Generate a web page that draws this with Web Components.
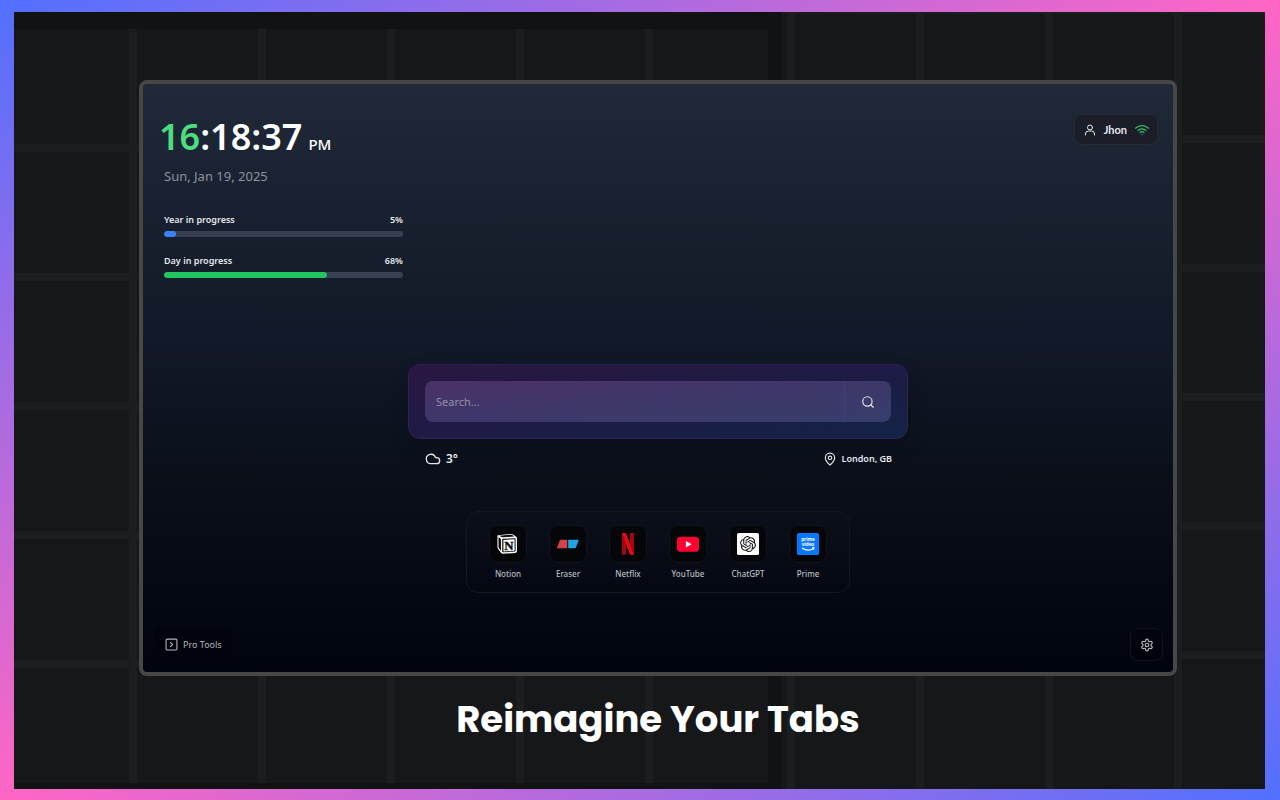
<!DOCTYPE html>
<html lang="en">
<head>
<meta charset="utf-8">
<meta name="viewport" content="width=device-width, initial-scale=1">
<title>Reimagine Your Tabs</title>
<style>
    :root {
        --green: #4ade80;
        --green-bar: #22c55e;
        --blue-bar: #3b82f6;
        --track: #374151;
        --text: #e5e7eb;
        --muted: #8b93a0;
        --stage: #161719;
        --line: #1c1d1e;
    }
    body {
        margin: 0;
        font-family: "Noto Sans", "Open Sans", sans-serif;
        color: var(--text);
    }
</style>
</head>
<body>
<promo-frame>
    <new-tab>
        <clock-panel slot="left" hours="16" rest=":18:37" period="PM" date="Sun, Jan 19, 2025"></clock-panel>
        <progress-row slot="left" label="Year in progress" value="5" color="blue-bar"></progress-row>
        <progress-row slot="left" label="Day in progress" value="68" color="green-bar"></progress-row>
        <user-chip slot="right">Jhon</user-chip>
        <search-box></search-box>
        <weather-row temp="3°" place="London, GB"></weather-row>
        <app-dock>
            <app-link icon="notion">Notion</app-link>
            <app-link icon="eraser">Eraser</app-link>
            <app-link icon="netflix">Netflix</app-link>
            <app-link icon="youtube">YouTube</app-link>
            <app-link icon="chatgpt">ChatGPT</app-link>
            <app-link icon="prime">Prime</app-link>
        </app-dock>
        <tool-button slot="footer" icon="tools">Pro Tools</tool-button>
        <tool-button slot="footer" icon="gear" name="Settings"></tool-button>
    </new-tab>
    <span slot="title">Reimagine Your Tabs</span>
</promo-frame>

<script>
const stroke = (size, body, width = 2) => `
    <svg width="${size}" height="${size}" viewBox="0 0 24 24" fill="none" stroke="currentColor" stroke-width="${width}" stroke-linecap="round" stroke-linejoin="round" aria-hidden="true">${body}</svg>`;

const icons = {
    user: stroke(12, '<circle cx="12" cy="7" r="5"/><path d="M3 22v-2a6 6 0 0 1 6-6h6a6 6 0 0 1 6 6v2"/>'),
    wifi: stroke(14, '<path d="M1 9a16 16 0 0 1 22 0"/><path d="M5 13a10 10 0 0 1 14 0"/><path d="M8.500 16.500a5 5 0 0 1 7 0"/><path d="M12 20h.01"/>', 2),
    search: stroke(14, '<circle cx="11" cy="11" r="8"/><path d="m21 21-4.300-4.300"/>'),
    cloud: stroke(16, '<path d="M17.500 19H9a7 7 0 1 1 6.710-9h1.790a4.500 4.500 0 1 1 0 9Z"/>'),
    pin: stroke(14, '<path d="M20 10c0 5-5.500 10.200-7.400 11.800a1 1 0 0 1-1.200 0C9.500 20.200 4 15 4 10a8 8 0 0 1 16 0"/><circle cx="12" cy="10" r="3"/>'),
    tools: stroke(13, '<rect x="2" y="2" width="20" height="20" rx="2"/><path d="m10 8 4 4-4 4"/>'),
    gear: stroke(14, '<path d="M12.220 2h-.44a2 2 0 0 0-2 2v.18a2 2 0 0 1-1 1.730l-.43.25a2 2 0 0 1-2 0l-.15-.08a2 2 0 0 0-2.730.73l-.22.38a2 2 0 0 0 .73 2.730l.15.1a2 2 0 0 1 1 1.720v.51a2 2 0 0 1-1 1.740l-.15.09a2 2 0 0 0-.73 2.730l.22.38a2 2 0 0 0 2.730.73l.15-.08a2 2 0 0 1 2 0l.43.25a2 2 0 0 1 1 1.730V20a2 2 0 0 0 2 2h.44a2 2 0 0 0 2-2v-.18a2 2 0 0 1 1-1.730l.43-.25a2 2 0 0 1 2 0l.15.08a2 2 0 0 0 2.730-.73l.22-.39a2 2 0 0 0-.73-2.730l-.15-.08a2 2 0 0 1-1-1.740v-.5a2 2 0 0 1 1-1.740l.15-.09a2 2 0 0 0 .73-2.730l-.22-.38a2 2 0 0 0-2.730-.73l-.15.08a2 2 0 0 1-2 0l-.43-.25a2 2 0 0 1-1-1.730V4a2 2 0 0 0-2-2z"/><circle cx="12" cy="12" r="3"/>')
};

const logos = {
    notion: `
        <path d="M1 2.500 15.500 1q1.200 0 2 .6L21 4.200q.8.700.8 1.500v14q0 1.800-1.700 2L6.500 22.600q-1.300 0-2-.9L1.300 17.500Q.5 16.600.5 15.500V3.600q0-1 .5-1.100z" fill="#fff"/>
        <path d="m2.300 2.900 13-1.100q.8 0 1.300.4l2.200 1.600L5.900 4.700q-.8 0-1.400-.5z" fill="#0a0b0e"/>
        <path d="m1.700 4.400 2.600 2.100v12.800l-2.200-2.900q-.4-.5-.4-1.200z" fill="#0a0b0e"/>
        <path d="m6.500 6.400 13-.8q.8 0 .8.800v13q0 .9-.8.900l-13 .8q-.8 0-.8-.8V7.300q0-.9.8-.9z" fill="#0a0b0e"/>
        <path d="m7 7.500 12.200-.8v12.700L7 20.100z" fill="#fff"/>
        <text x="13" y="18" text-anchor="middle" font-family="Liberation Serif, serif" font-weight="700" font-size="14" fill="#0a0b0e" stroke="#0a0b0e" stroke-width=".4">N</text>`,
    eraser: `
        <path d="M4.200 7.300h7v9.200H.5q-.7 0-.4-.8l2.900-7.600q.3-.8 1.200-.8z" fill="#d8414b"/>
        <path d="M12.200 7.300h11q.7 0 .4.800l-2.900 7.600q-.3.800-1.200.8h-7.300z" fill="#1fa5e1"/>`,
    netflix: `
        <path d="M5.500 0h4.300v23.400L5.500 24zM14.200 0h4.300v24l-4.300-.6z" fill="#a80710"/>
        <path d="M5.500 0h4.300l8.700 24-4.500-.6z" fill="#e50914"/>`,
    youtube: `
        <rect y="4" width="24" height="16.500" rx="4" fill="#ff0033"/>
        <path d="m9.700 8.600 6.200 3.600-6.200 3.600z" fill="#fff"/>`,
    chatgpt: `
        <rect width="24" height="24" rx="2" fill="#fff"/>
        <path transform="translate(3.400 3.400) scale(.72)" fill="#111" d="M22.2819 9.8211a5.9847 5.9847 0 0 0-.5157-4.9108 6.0462 6.0462 0 0 0-6.5098-2.9A6.0651 6.0651 0 0 0 4.9807 4.1818a5.9847 5.9847 0 0 0-3.9977 2.9 6.0462 6.0462 0 0 0 .7427 7.0966 5.98 5.98 0 0 0 .511 4.9107 6.051 6.051 0 0 0 6.5146 2.9001A5.9847 5.9847 0 0 0 13.2599 24a6.0557 6.0557 0 0 0 5.7718-4.2058 5.9894 5.9894 0 0 0 3.9977-2.9001 6.0557 6.0557 0 0 0-.7475-7.0729zm-9.022 12.6081a4.4755 4.4755 0 0 1-2.8764-1.0408l.1419-.0804 4.7783-2.7582a.7948.7948 0 0 0 .3927-.6813v-6.7369l2.02 1.1686a.071.071 0 0 1 .038.052v5.5826a4.504 4.504 0 0 1-4.4945 4.4944zm-9.6607-4.1254a4.4708 4.4708 0 0 1-.5346-3.0137l.142.0852 4.783 2.7582a.7712.7712 0 0 0 .7806 0l5.8428-3.3685v2.3324a.0804.0804 0 0 1-.0332.0615L9.74 19.9502a4.4992 4.4992 0 0 1-6.1408-1.6464zM2.3408 7.8956a4.485 4.485 0 0 1 2.3655-1.9728V11.6a.7664.7664 0 0 0 .3879.6765l5.8144 3.3543-2.0201 1.1685a.0757.0757 0 0 1-.071 0l-4.8303-2.7865A4.504 4.504 0 0 1 2.3408 7.872zm16.5963 3.8558L13.1038 8.364 15.1192 7.2a.0757.0757 0 0 1 .071 0l4.8303 2.7913a4.4944 4.4944 0 0 1-.6765 8.1042v-5.6772a.79.79 0 0 0-.407-.667zm2.0107-3.0231l-.142-.0852-4.7735-2.7818a.7759.7759 0 0 0-.7854 0L9.409 9.2297V6.8974a.0662.0662 0 0 1 .0284-.0615l4.8303-2.7866a4.4992 4.4992 0 0 1 6.6802 4.66zM8.3065 12.863l-2.02-1.1638a.0804.0804 0 0 1-.038-.0567V6.0742a4.4992 4.4992 0 0 1 7.3757-3.4537l-.142.0805L8.704 5.459a.7948.7948 0 0 0-.3927.6813zm1.0976-2.3654l2.602-1.4998 2.6069 1.4998v2.9994l-2.5974 1.4997-2.6067-1.4997Z"/>`,
    prime: `
        <rect width="24" height="24" rx="2" fill="#0578ff"/>
        <g fill="#fff" font-family="Open Sans, sans-serif" font-weight="700" font-size="5" text-anchor="middle">
            <text x="12" y="9">prime</text>
            <text x="12" y="14">video</text>
        </g>
        <path d="M5.500 16.300q6.500 4.400 12.500.6M16.400 16l2.200.2-.7 2" fill="none" stroke="#fff" stroke-width="1.200"/>`
};

// shared base: opens the shadow root and fills it once connected
class BaseElement extends HTMLElement {
    constructor() {
        super();
        this.attachShadow({ mode: "open" });
    }

    connectedCallback() {
        const template = document.createElement('template');
        template.innerHTML = `<style>* { box-sizing: border-box; } svg { display: block; flex: none; } ${this.getStyles()}</style>${this.getTemplate()}`;
        this.shadowRoot.append(template.content.cloneNode(true));
    }
}

class PromoFrame extends BaseElement {
    getTemplate() {
        return `
            <main>
                <div class="backdrop"><div class="left"></div><div class="right"></div></div>
                <div class="content">
                    <slot></slot>
                    <h1><slot name="title"></slot></h1>
                </div>
            </main>
        `;
    }

    getStyles() {
        return `
            :host {
                display: flex;
                min-height: 100vh;
                box-sizing: border-box;
                padding: 12px 15px 11px 14px;
                background: linear-gradient(to bottom right, #5170ff, #ff66c4 50%, #5170ff);
            }
            main {
                flex: 1;
                display: grid;
                background-color: var(--stage);
            }
            .backdrop, .content {
                grid-area: 1 / 1;
            }
            .backdrop {
                display: grid;
                grid-template-columns: 768fr 483fr;
            }
            .left {
                border: solid #111213;
                border-width: 17px 14px 6px 0;
                background-image:
                    linear-gradient(90deg, transparent 115px, var(--line) 115px 123px, transparent 123px),
                    linear-gradient(transparent 115px, var(--line) 115px 123px, transparent 123px);
                background-size: 129px 129px;
                background-clip: padding-box;
            }
            /* the middle layer hides the row line that would touch the bottom edge */
            .right {
                background:
                    linear-gradient(90deg, transparent 5px, var(--line) 5px 13px, transparent 13px) 0 0 / 129px 129px,
                    linear-gradient(var(--stage), var(--stage)) bottom / 100% 12px no-repeat,
                    linear-gradient(transparent 121px, var(--line) 121px, var(--line)) 0 2px / 129px 129px;
            }
            .content {
                display: flex;
                flex-direction: column;
                padding: 68px 88px 0 125px;
            }
            h1 {
                margin: 0;
                padding: 18px 0 45px;
                font: 700 37px/50px Poppins, Inter, sans-serif;
                color: #fff;
                text-align: center;
            }
        `;
    }
}

class NewTab extends BaseElement {
    getTemplate() {
        return `
            <header>
                <div class="info"><slot name="left"></slot></div>
                <slot name="right"></slot>
            </header>
            <section><slot></slot></section>
            <footer><slot name="footer"></slot></footer>
        `;
    }

    getStyles() {
        return `
            :host {
                flex: 1;
                display: flex;
                flex-direction: column;
                justify-content: space-between;
                border: 4px solid #474747;
                border-radius: 8px;
                background: linear-gradient(#1f2937, #111827 45%, #0a0f1a 67%, #01040f) padding-box;
            }
            header, footer {
                display: flex;
                justify-content: space-between;
                align-items: flex-start;
            }
            header {
                padding: 30px 15px 0 16px;
            }
            .info {
                width: 244px;
            }
            section {
                display: flex;
                flex-direction: column;
                align-items: center;
                padding: 51px 16px 0;
            }
            footer {
                padding: 0 10px 11px 11px;
            }
        `;
    }
}

class ClockPanel extends BaseElement {
    getTemplate() {
        return `
            <div class="clock">
                <div class="time"><span class="hours">${this.getAttribute('hours')}</span>${this.getAttribute('rest')}</div>
                <span class="period">${this.getAttribute('period')}</span>
            </div>
            <div class="date">${this.getAttribute('date')}</div>
        `;
    }

    getStyles() {
        return `
            :host { display: block; padding-bottom: 10px; }
            .clock {
                display: flex;
                align-items: baseline;
                gap: 6px;
                color: #fff;
                font-weight: 600;
                white-space: nowrap;
            }
            .time { font-size: 36px; line-height: 46px; }
            .hours { color: var(--green); }
            .period { font-size: 15px; font-weight: 500; }
            .date {
                padding: 6px 0 0 5px;
                font-size: 13px;
                line-height: 20px;
                color: var(--muted);
            }
        `;
    }
}

class ProgressRow extends BaseElement {
    getTemplate() {
        const value = this.getAttribute('value');
        return `
            <div class="text"><label for="bar">${this.getAttribute('label')}</label><span>${value}%</span></div>
            <progress id="bar" max="100" value="${value}"></progress>
        `;
    }

    getStyles() {
        return `
            :host { display: block; padding: 16px 0 0 5px; }
            .text {
                display: flex;
                justify-content: space-between;
                font-size: 9px;
                line-height: 15px;
                font-weight: 600;
            }
            progress {
                appearance: none;
                display: block;
                width: 100%;
                height: 6px;
                margin-top: 4px;
                border: 0;
                border-radius: 3px;
                overflow: hidden;
                background: var(--track);
            }
            progress::-webkit-progress-bar { background: var(--track); }
            progress::-webkit-progress-value {
                background: var(--${this.getAttribute('color')});
                border-radius: 3px;
            }
        `;
    }
}

class UserChip extends BaseElement {
    getTemplate() {
        return `<button type="button">${icons.user}<slot></slot><span class="wifi">${icons.wifi}</span></button>`;
    }

    getStyles() {
        return `
            :host { display: block; }
            button {
                display: flex;
                align-items: center;
                gap: 8px;
                height: 31px;
                padding: 0 8px 0 9px;
                border: 1px solid #272933;
                border-radius: 8px;
                background: #1b1d28;
                color: var(--text);
                font: 700 11px/16px Lato, sans-serif;
            }
            .wifi { color: #35c46d; }
        `;
    }
}

class SearchBox extends BaseElement {
    getTemplate() {
        return `
            <form role="search">
                <input type="text" placeholder="Search..." aria-label="Search">
                <button type="button" aria-label="Search">${icons.search}</button>
            </form>
        `;
    }

    getStyles() {
        return `
            :host {
                display: block;
                width: 100%;
                max-width: 500px;
                box-sizing: border-box;
                padding: 16px;
                border: 1px solid #2d2052;
                border-radius: 12px;
                background: linear-gradient(to bottom right, #2a1743, #1e1b44 50%, #132346);
                box-shadow: 0 8px 20px rgba(0, 0, 0, .15);
            }
            form {
                display: flex;
                height: 41px;
                border-radius: 8px;
                overflow: hidden;
                background: linear-gradient(to bottom right, #4b316a, #3e376a 50%, #363e6b);
            }
            input, button {
                border: 0;
                background: none;
                color: var(--text);
            }
            input {
                flex: 1;
                min-width: 0;
                padding: 0 11px;
                font: 11px/20px "Noto Sans", sans-serif;
            }
            input::placeholder { color: #9390ab; }
            button {
                display: grid;
                place-items: center;
                width: 47px;
                padding: 0;
                border-left: 1px solid #4b3b78;
            }
        `;
    }
}

class WeatherRow extends BaseElement {
    getTemplate() {
        return `
            <div class="temp">${icons.cloud}<span>${this.getAttribute('temp')}</span></div>
            <div class="place">${icons.pin}<span>${this.getAttribute('place')}</span></div>
        `;
    }

    getStyles() {
        return `
            :host {
                display: flex;
                justify-content: space-between;
                width: 100%;
                max-width: 500px;
                box-sizing: border-box;
                padding: 12px 16px 0 17px;
                font-weight: 600;
                line-height: 16px;
            }
            div { display: flex; align-items: center; gap: 5px; }
            .temp { font-size: 12px; }
            .place { font-size: 9px; }
        `;
    }
}

class AppDock extends BaseElement {
    getTemplate() {
        return `<nav aria-label="Shortcuts"><slot></slot></nav>`;
    }

    getStyles() {
        return `
            :host { display: block; padding-top: 44px; }
            nav {
                display: flex;
                gap: 22px;
                padding: 13px 22px 12px;
                border: 1px solid #141722;
                border-radius: 12px;
                background: linear-gradient(#0b0f19, #050812);
            }
        `;
    }
}

class AppLink extends BaseElement {
    getTemplate() {
        return `
            <a href="#">
                <span class="tile"><svg width="22" height="22" viewBox="0 0 24 24" aria-hidden="true">${logos[this.getAttribute('icon')]}</svg></span>
                <span class="name"><slot></slot></span>
            </a>
        `;
    }

    getStyles() {
        return `
            :host { display: block; width: 38px; }
            a {
                display: flex;
                flex-direction: column;
                align-items: center;
                gap: 5px;
                color: #b9bcc2;
                text-decoration: none;
            }
            .tile {
                display: grid;
                place-items: center;
                width: 38px;
                height: 38px;
                border: 1px solid #11141b;
                border-radius: 8px;
                background: #04060a;
            }
            .name { font-size: 8px; line-height: 12px; font-weight: 500; white-space: nowrap; }
        `;
    }
}

class ToolButton extends BaseElement {
    getTemplate() {
        const name = this.getAttribute('name');
        return `<button type="button" ${name ? `aria-label="${name}" class="square"` : ''}>${icons[this.getAttribute('icon')]}<slot></slot></button>`;
    }

    getStyles() {
        return `
            :host { display: block; }
            button {
                display: flex;
                align-items: center;
                gap: 5px;
                height: 33px;
                padding: 0 10px;
                border: 1px solid transparent;
                border-radius: 8px;
                background: #02030c;
                color: #b4b6bc;
                font: 9px/16px "Noto Sans", sans-serif;
            }
            .square {
                justify-content: center;
                width: 33px;
                padding: 0;
                border-color: #10131d;
            }
        `;
    }
}

customElements.define('clock-panel', ClockPanel);
customElements.define('progress-row', ProgressRow);
customElements.define('user-chip', UserChip);
customElements.define('search-box', SearchBox);
customElements.define('weather-row', WeatherRow);
customElements.define('app-link', AppLink);
customElements.define('app-dock', AppDock);
customElements.define('tool-button', ToolButton);
customElements.define('new-tab', NewTab);
customElements.define('promo-frame', PromoFrame);
</script>
</body>
</html>
